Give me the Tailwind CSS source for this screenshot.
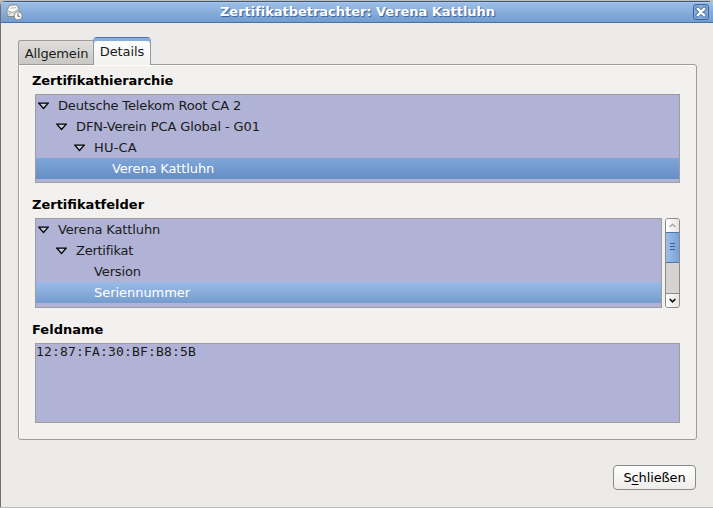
<!DOCTYPE html>
<html lang="de">
<head>
<meta charset="utf-8">
<title>Zertifikatbetrachter: Verena Kattluhn</title>
<script src="https://cdn.jsdelivr.net/npm/@tailwindcss/browser@4"></script>
</head>
<body class="w-[713px] h-[508px] overflow-hidden bg-[#bdbdbb] font-['DejaVu_Sans',sans-serif] text-[13px] text-[#1a1a1a]">
<div class="flex h-[508px] flex-col pt-px">
  <main class="flex h-[506px] flex-col overflow-hidden rounded-t-[5px] border-l border-[#6e6e6e] bg-[#ecebe9]">
    <header class="flex h-[22px] shrink-0 items-center border-t border-b border-t-[#3b5a7e] border-b-[#4471a8] bg-linear-to-b from-[#9dbfe8] to-[#749ccf] pl-[5px] pr-[4px] shadow-[inset_0_1px_0_#a9c8ec]">
      <svg class="h-[17px] w-[17px]" viewBox="0 0 17 17" fill="none">
        <path d="M.8 6.500L3.500 1.200L11 .8L13 5L12.500 12.500L1.500 12.500Z" fill="#e9e7e2" stroke="#8b8a87"/>
        <path d="M3.500 2.500L10.500 2V6L7 8L2.500 6.500Z" fill="#fff"/>
        <path d="M1.500 7L7 8.500L12 5.500M1.800 11.500L5.500 8.500M4.500 4.200L10 3.700" stroke="#aaa9a5"/>
        <circle cx="12.200" cy="11.800" r="4" fill="#f8f8f6" stroke="#85888c"/>
        <path d="M12 9.300V12.300H14" stroke="#666"/>
      </svg>
      <h1 class="flex-1 pr-px text-center text-[13px] leading-[20px] font-bold tracking-[-0.03px] [font-variant-ligatures:normal] whitespace-nowrap text-white [text-shadow:1px_1px_1px_#355f94]">Zertifikatbetrachter: Verena Kattluhn</h1>
      <button class="flex h-[16px] w-[16px] items-center justify-center rounded-[3px] border border-[#3b6598] bg-[#86abd9]" aria-label="Schließen">
        <svg class="h-[12px] w-[12px]" viewBox="0 0 12 12"><path d="M2.500 2.500L9.500 9.500M9.500 2.500L2.500 9.500" stroke="#4a76ad" stroke-width="4.400" stroke-linecap="round"/><path d="M2.700 2.700L9.300 9.300M9.300 2.700L2.700 9.300" stroke="#fff" stroke-width="2.400" stroke-linecap="round"/></svg>
      </button>
    </header>
    <nav class="z-10 mt-[14px] ml-[17px] flex h-[28px] shrink-0 items-end">
      <div class="mb-px flex h-[24px] w-[75px] justify-center rounded-tl-[3px] border-t border-l border-[#9d9c99] bg-linear-to-b from-[#dfdedc] to-[#c9c8c4] pt-[4px] pl-px leading-[18px] tracking-[-0.15px]"><span>Allgemein</span></div>
      <div class="flex h-[28px] w-[58px] justify-center rounded-t-[4px] border-x border-t border-[#4c78b0] border-x-[#8f9aa8] bg-linear-to-b from-white to-[#f2f1ef] pt-[5px] leading-[18px] tracking-[-0.1px] shadow-[inset_0_3px_0_#86ade0]"><span>Details</span></div>
    </nav>
    <section class="-mt-px ml-[17px] flex h-[376px] w-[679px] shrink-0 flex-col rounded-[3px] rounded-tl-none border border-[#9d9c99] bg-[#f2f1ef] pr-[16px] pl-[16px] shadow-[inset_1px_1px_0_#fff]">
      <h2 class="-ml-[3px] h-[29px] shrink-0 pt-[7px] leading-[18px] font-bold tracking-[-0.11px] text-black">Zertifikathierarchie</h2>
      <ul class="h-[89px] shrink-0 border border-[#9f9d99] bg-[#b0b3d6] leading-[21px]">
        <li class="flex h-[21px] items-center pl-[2px]"><svg class="mr-[9px] h-[8px] w-[11px]" viewBox="0 0 11 8"><path d="M.8 1.200H10.200L5.500 6.500Z" fill="#c9cbe3" stroke="#000" stroke-width="1.200"/></svg><span class="tracking-[-0.14px]">Deutsche Telekom Root CA 2</span></li>
        <li class="flex h-[21px] items-center pl-[20px]"><svg class="mr-[9px] h-[8px] w-[11px]" viewBox="0 0 11 8"><path d="M.8 1.200H10.200L5.500 6.500Z" fill="#c9cbe3" stroke="#000" stroke-width="1.200"/></svg><span class="tracking-[-0.12px]">DFN-Verein PCA Global - G01</span></li>
        <li class="flex h-[21px] items-center pl-[38px]"><svg class="mr-[9px] h-[8px] w-[11px]" viewBox="0 0 11 8"><path d="M.8 1.200H10.200L5.500 6.500Z" fill="#c9cbe3" stroke="#000" stroke-width="1.200"/></svg><span class="tracking-[0.2px]">HU-CA</span></li>
        <li class="h-[21px] bg-linear-to-b from-[#80a6d8] to-[#658ec5] pl-[76px] tracking-[-0.13px] text-white">Verena Kattluhn</li>
      </ul>
      <h2 class="-ml-[3px] h-[35px] shrink-0 pt-[13px] leading-[18px] font-bold text-black">Zertifikatfelder</h2>
      <div class="flex h-[90px] shrink-0 gap-[3px]">
        <ul class="w-[627px] border border-[#9f9d99] bg-[#b0b3d6] leading-[21px]">
          <li class="flex h-[21px] items-center pl-[2px]"><svg class="mr-[9px] h-[8px] w-[11px]" viewBox="0 0 11 8"><path d="M.8 1.200H10.200L5.500 6.500Z" fill="#c9cbe3" stroke="#000" stroke-width="1.200"/></svg><span class="tracking-[-0.13px]">Verena Kattluhn</span></li>
          <li class="flex h-[21px] items-center pl-[20px]"><svg class="mr-[9px] h-[8px] w-[11px]" viewBox="0 0 11 8"><path d="M.8 1.200H10.200L5.500 6.500Z" fill="#c9cbe3" stroke="#000" stroke-width="1.200"/></svg><span class="tracking-[-0.25px]">Zertifikat</span></li>
          <li class="h-[21px] pl-[58px] tracking-[-0.12px]">Version</li>
          <li class="h-[21px] bg-linear-to-b from-[#9abbe6] to-[#759ccf] pl-[58px] tracking-[-0.04px] text-white">Seriennummer</li>
        </ul>
        <div class="flex w-[15px] flex-col overflow-hidden rounded-[3px] border border-[#8b8a87] bg-[#d4d3d1]">
          <div class="flex h-[13px] items-center justify-center bg-linear-to-r from-white to-[#e6e5e3]"><svg class="h-[5px] w-[7px]" viewBox="0 0 7 5"><path d="M.7 4L3.500 1.200L6.300 4" fill="none" stroke="#aaa9a5" stroke-width="1.500"/></svg></div>
          <div class="-mx-px flex h-[31px] flex-col items-center justify-center gap-[2px] border border-[#4c78b0] bg-linear-to-r from-[#9dbfe8] to-[#7ba2d6] pb-[2px]"><i class="h-px w-[5px] bg-[#3b5f91]"></i><i class="h-px w-[5px] bg-[#3b5f91]"></i><i class="h-px w-[5px] bg-[#3b5f91]"></i></div>
          <div class="mt-auto flex h-[14px] items-center justify-center border-t border-[#8b8a87] bg-linear-to-r from-white to-[#e6e5e3]"><svg class="h-[5px] w-[7px]" viewBox="0 0 7 5"><path d="M.7 1L3.500 3.800L6.300 1" fill="none" stroke="#111" stroke-width="1.700"/></svg></div>
        </div>
      </div>
      <h2 class="-ml-[3px] h-[35px] shrink-0 pt-[13px] leading-[18px] font-bold text-black">Feldname</h2>
      <div class="h-[80px] shrink-0 border border-[#9f9d99] bg-[#b0b3d6] font-['DejaVu_Sans_Mono',monospace] leading-[16px] tracking-[0.174px]">12:87:FA:30:BF:B8:5B</div>
    </section>
    <footer class="mt-[25px] mr-[17px] flex justify-end">
      <button class="h-[25px] w-[83px] rounded-[4px] border border-[#8b8a87] bg-linear-to-b from-white to-[#eeedeb] text-[13px] leading-[22px] tracking-[-0.12px] text-black">S<u class="underline-offset-2">c</u>hließen</button>
    </footer>
  </main>
</div>
</body>
</html>
